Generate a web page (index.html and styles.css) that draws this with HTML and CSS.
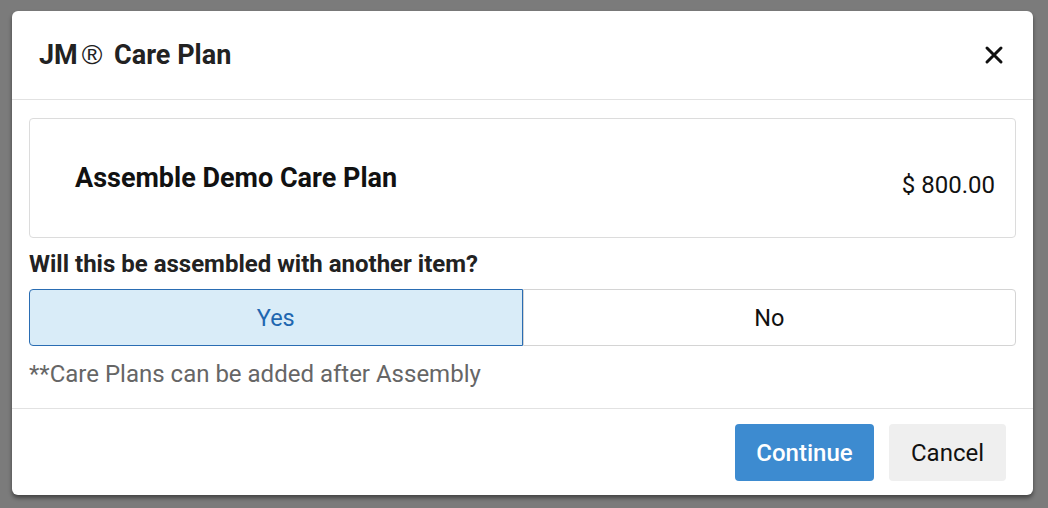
FILE: index.html
```html
<!DOCTYPE html>
<html lang="en">

<head>
    <meta charset="UTF-8">
    <meta name="viewport" content="width=device-width, initial-scale=1.0">
    <title>JM Care Plan</title>
    <link rel="stylesheet" href="styles.css">
</head>

<body>
    <div class="backdrop">
        <div class="modal">
            <div class="modal-header">
                <h3 class="modal-title">JM<span class="reg">®</span> Care Plan</h3>
                <span class="close">
                    <svg width="20" height="20" viewBox="0 0 20 20">
                        <path d="M3 3 L17 17 M17 3 L3 17" stroke="#111" stroke-width="3" stroke-linecap="round" />
                    </svg>
                </span>
            </div>
            <div class="modal-body">
                <div class="plan-card">
                    <div class="plan-name">Assemble Demo Care Plan</div>
                    <div class="plan-price">$ 800.00</div>
                </div>
                <p class="question">Will this be assembled with another item?</p>
                <div class="toggle">
                    <button class="toggle-btn active">Yes</button>
                    <button class="toggle-btn">No</button>
                </div>
                <p class="note">**Care Plans can be added after Assembly</p>
            </div>
            <div class="modal-footer">
                <button class="btn btn-primary">Continue</button>
                <button class="btn btn-default">Cancel</button>
            </div>
        </div>
    </div>
</body>
</html>
```

FILE: styles.css
```css
html,
body {
    margin: 0;
    padding: 0;
    height: 100%;
    background-color: #7b7b7b;
    font-family: Roboto, "Liberation Sans", Arial, sans-serif;
    color: #111;
}

.backdrop {
    padding: 11px 15px 0 12px;
}

.modal {
    height: 484px;
    background-color: #ffffff;
    border-radius: 6px;
    box-shadow: 0 3px 4px rgba(0, 0, 0, 0.45);
    display: flex;
    flex-direction: column;
}

.modal-header {
    height: 88px;
    display: flex;
    align-items: center;
    justify-content: space-between;
    padding: 0 29px 0 27px;
    border-bottom: 1px solid #e2e2e2;
}

.modal-title {
    margin: 0;
    font-size: 27px;
    font-weight: 700;
    color: #222;
}

.modal-title .reg {
    font-family: "Liberation Sans", Arial, sans-serif;
    font-weight: 400;
    font-size: 28px;
    margin: 0 5px 0 4px;
}

.close {
    display: flex;
    cursor: pointer;
}

.modal-body {
    padding: 18px 17px 22px 17px;
    border-bottom: 1px solid #e2e2e2;
}

.plan-card {
    height: 118px;
    border: 1px solid #dcdcdc;
    border-radius: 4px;
    display: flex;
    align-items: center;
    justify-content: space-between;
    padding: 0 20px 0 45px;
}

.plan-name {
    font-size: 27px;
    font-weight: 700;
}

.plan-price {
    font-size: 24px;
    margin-top: 14px;
}

.question {
    margin: 14px 0 13px 0;
    font-size: 24px;
    font-weight: 700;
    line-height: 24px;
    color: #222;
}

.toggle {
    display: flex;
    height: 57px;
}

.toggle-btn {
    flex: 1;
    font-family: inherit;
    font-size: 23.5px;
    color: #111;
    background-color: #fff;
    border: 1px solid #d4d4d4;
    border-radius: 0 4px 4px 0;
    cursor: pointer;
}

.toggle-btn.active {
    background-color: #d9ecf8;
    border-color: #2a6db3;
    color: #1f67b0;
    border-radius: 4px 0 0 4px;
}

.note {
    margin: 16px 0 0 0;
    font-size: 24px;
    line-height: 24px;
    color: #666;
}

.modal-footer {
    flex: 1;
    display: flex;
    justify-content: flex-end;
    align-items: flex-start;
    gap: 15px;
    padding: 15px 27px 0 0;
}

.btn {
    height: 57px;
    font-family: inherit;
    font-size: 24px;
    border: none;
    border-radius: 4px;
    cursor: pointer;
}

.btn-primary {
    width: 139px;
    background-color: #3d8bd0;
    color: #fff;
    font-weight: 500;
}

.btn-default {
    width: 117px;
    background-color: #efefef;
    color: #111;
}
```
